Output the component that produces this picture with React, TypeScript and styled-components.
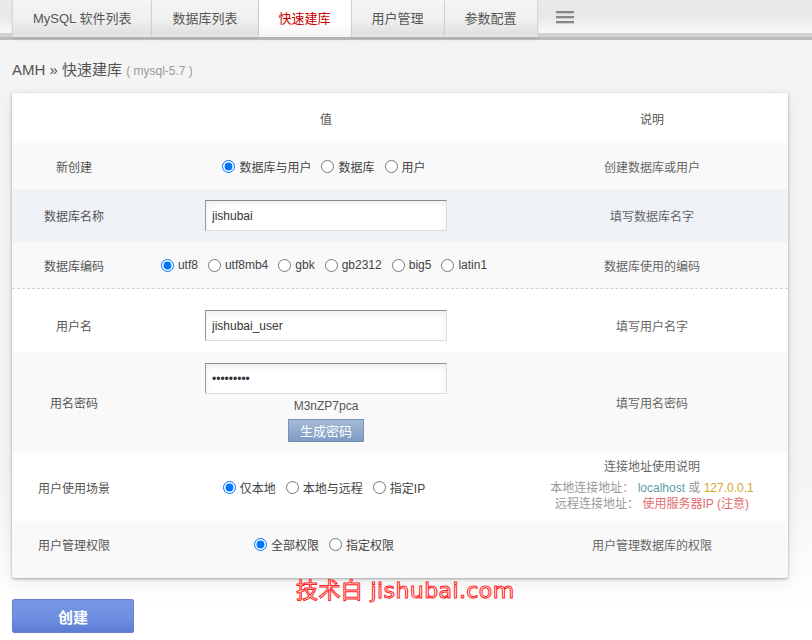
import React from 'react'
import styled, { createGlobalStyle } from 'styled-components'

const GlobalStyle = createGlobalStyle`
  html, body {
    margin: 0;
    padding: 0;
  }
  body {
    font-family: "Liberation Sans", "Noto Sans CJK SC", sans-serif;
    font-size: 12px;
    color: #555;
    background: linear-gradient(#f4f4f4 0, #f4f4f4 470px, #fff 610px);
    min-height: 640px;
  }
`

const Page = styled.div`
  position: relative;
  width: 812px;
  height: 640px;
  overflow: hidden;
`

const NavBar = styled.div`
  display: flex;
  height: 40px;
  padding-left: 12px;
  background: linear-gradient(
    #e9e9e9 0,
    #e9e9e9 17px,
    #f9f9f9 33px,
    #d3d3d3 33px,
    #d3d3d3 37px,
    #bcbcbc 37px,
    #bcbcbc 40px
  );
`

const Tab = styled.div<{ $active?: boolean }>`
  height: 37px;
  padding: 0 20px;
  line-height: 38px;
  font-size: 13px;
  color: ${p => (p.$active ? '#cc0000' : '#555')};
  border-right: 1px solid #d6d6d6;
  background: ${p =>
    p.$active
      ? 'linear-gradient(#fff 0, #fff 60%, #f3f3f3 100%)'
      : 'linear-gradient(#f4f4f4 0, #efefef 55%, #e1e1e1 90%, #e8e8e8 100%)'};
  box-shadow: 0 3px 4px rgba(0, 0, 0, 0.06);

  &:first-child {
    border-left: 1px solid #d6d6d6;
  }
`

const MenuIcon = styled.svg`
  margin: 11px 0 0 18px;
`

const Crumb = styled.div`
  margin: 20px 12px 12px;
  line-height: 20px;
  font-size: 15px;
  color: #555;

  small {
    font-size: 12px;
    color: #999;
  }
`

const Card = styled.div`
  width: 776px;
  margin-left: 12px;
  background: #fff;
  border-radius: 3px;
  box-shadow: 0 1px 3px rgba(0, 0, 0, 0.35), 0 4px 18px rgba(0, 0, 0, 0.07);
  overflow: hidden;
`

const Row = styled.div<{ $bg?: string; $dashed?: boolean }>`
  display: grid;
  grid-template-columns: 124px 380px 1fr;
  background: ${p => p.$bg || '#fff'};
  ${p => p.$dashed && 'border-top: 1px dashed #cfcfcf; padding-top: 10px;'}
`

const Cell = styled.div<{ $pad?: string }>`
  display: flex;
  flex-direction: column;
  align-items: center;
  justify-content: center;
  min-height: 24px;
  padding: ${p => p.$pad || '11px 8px'};
  text-align: center;
`

const Label = styled(Cell)`
  color: #555;
`

const Desc = styled(Cell)`
  color: #666;
`

const Options = styled.div`
  display: flex;
  align-items: center;
  justify-content: center;
  padding-right: 4px;
  color: #444;
`

const Option = styled.label`
  display: inline-flex;
  align-items: center;
  gap: 4px;
  margin-right: 10px;

  &:last-child {
    margin-right: 0;
  }

  input {
    width: 13px;
    height: 13px;
    margin: 0;
  }
`

const TextInput = styled.input`
  box-sizing: border-box;
  width: 242px;
  height: 31px;
  padding: 0 6px;
  font-family: inherit;
  font-size: 12px;
  color: #333;
  border: 1px solid;
  border-color: #8a8a8a #dcdcdc #dcdcdc #9a9a9a;
  box-shadow: inset 0 3px 6px rgba(0, 0, 0, 0.07);
  outline: none;
`

const Generated = styled.div`
  margin-top: 4px;
  line-height: 16px;
  color: #555;
`

const GenButton = styled.button`
  width: 76px;
  height: 23px;
  margin-top: 5px;
  padding: 0;
  font-family: inherit;
  font-size: 13px;
  color: #fff;
  border: 1px solid #7690b6;
  background: linear-gradient(#a5b9d4, #7f9cc6);
`

const HintTitle = styled.div`
  line-height: 20px;
`

const HintLine = styled.div`
  margin-top: 3px;
  line-height: 16px;
  color: #999;

  & + & {
    margin-top: 0;
  }
`

const Tone = styled.span<{ $c: string }>`
  color: ${p => p.$c};
`

const CreateButton = styled.button`
  display: block;
  width: 122px;
  height: 34px;
  margin: 21px 0 0 12px;
  font-family: inherit;
  font-size: 15px;
  font-weight: bold;
  color: #fff;
  border: 1px solid #6582cf;
  border-radius: 2px;
  background: linear-gradient(#7896e4 0, #6f8ee0 60%, #5b7bd4 100%);
`

const Watermark = styled.div`
  position: absolute;
  left: 296px;
  top: 576px;
  font-family: "DejaVu Sans", "Noto Sans CJK SC", sans-serif;
  font-size: 22px;
  letter-spacing: 0.4px;
  line-height: 30px;
  color: #fff;
  -webkit-text-stroke: 1px #f22;
  white-space: nowrap;
`

type Choice = { label: string; checked?: boolean }

const RadioGroup = ({ name, items }: { name: string; items: Choice[] }) => (
  <Options>
    {items.map(it => (
      <Option key={it.label}>
        <input type="radio" name={name} defaultChecked={it.checked} />
        {it.label}
      </Option>
    ))}
  </Options>
)

const tabs = ['MySQL 软件列表', '数据库列表', '快速建库', '用户管理', '参数配置']

export default function App() {
  return (
    <Page>
      <GlobalStyle />
      <NavBar>
        {tabs.map(t => (
          <Tab key={t} $active={t === '快速建库'}>
            {t}
          </Tab>
        ))}
        <MenuIcon width="18" height="13" viewBox="0 0 18 13">
          <rect x="0" y="0" width="18" height="2.3" fill="#888" />
          <rect x="0" y="5" width="18" height="2.3" fill="#888" />
          <rect x="0" y="10" width="18" height="2.3" fill="#888" />
        </MenuIcon>
      </NavBar>

      <Crumb>
        AMH » 快速建库 <small>( mysql-5.7 )</small>
      </Crumb>

      <Card>
        <Row>
          <Label $pad="13px 8px" />
          <Label $pad="13px 8px">值</Label>
          <Label $pad="13px 8px">说明</Label>
        </Row>
        <Row $bg="#f9f9f9">
          <Label>新创建</Label>
          <Cell>
            <RadioGroup
              name="create"
              items={[{ label: '数据库与用户', checked: true }, { label: '数据库' }, { label: '用户' }]}
            />
          </Cell>
          <Desc>创建数据库或用户</Desc>
        </Row>
        <Row $bg="#eff3f7">
          <Label>数据库名称</Label>
          <Cell>
            <TextInput defaultValue="jishubai" />
          </Cell>
          <Desc>填写数据库名字</Desc>
        </Row>
        <Row $bg="#f9f9f9">
          <Label>数据库编码</Label>
          <Cell>
            <RadioGroup
              name="charset"
              items={[
                { label: 'utf8', checked: true },
                { label: 'utf8mb4' },
                { label: 'gbk' },
                { label: 'gb2312' },
                { label: 'big5' },
                { label: 'latin1' },
              ]}
            />
          </Cell>
          <Desc>数据库使用的编码</Desc>
        </Row>
        <Row $dashed>
          <Label>用户名</Label>
          <Cell>
            <TextInput defaultValue="jishubai_user" />
          </Cell>
          <Desc>填写用户名字</Desc>
        </Row>
        <Row $bg="#f9f9f9">
          <Label>用名密码</Label>
          <Cell>
            <TextInput type="password" defaultValue="M3nZP7pca" />
            <Generated>M3nZP7pca</Generated>
            <GenButton>生成密码</GenButton>
          </Cell>
          <Desc>填写用名密码</Desc>
        </Row>
        <Row>
          <Label>用户使用场景</Label>
          <Cell>
            <RadioGroup
              name="scene"
              items={[{ label: '仅本地', checked: true }, { label: '本地与远程' }, { label: '指定IP' }]}
            />
          </Cell>
          <Desc $pad="4px 8px 9px">
            <HintTitle>连接地址使用说明</HintTitle>
            <HintLine>
              本地连接地址：&nbsp;<Tone $c="#5e9ea6">localhost</Tone> 或 <Tone $c="#d9a528">127.0.0.1</Tone>
            </HintLine>
            <HintLine>
              远程连接地址：&nbsp;<Tone $c="#e26b6e">使用服务器IP (注意)</Tone>
            </HintLine>
          </Desc>
        </Row>
        <Row $bg="#f9f9f9">
          <Label $pad="11px 8px 22px">用户管理权限</Label>
          <Cell $pad="11px 8px 22px">
            <RadioGroup name="grant" items={[{ label: '全部权限', checked: true }, { label: '指定权限' }]} />
          </Cell>
          <Desc $pad="11px 8px 22px">用户管理数据库的权限</Desc>
        </Row>
      </Card>

      <CreateButton>创建</CreateButton>
      <Watermark>技术白 jishubai.com</Watermark>
    </Page>
  )
}
